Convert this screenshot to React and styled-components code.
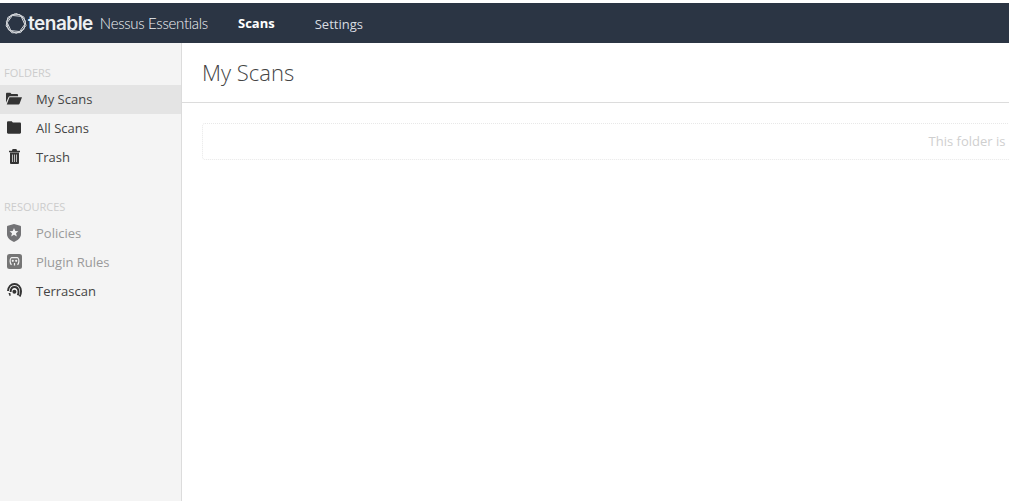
import React from "react";
import styled, { createGlobalStyle } from "styled-components";

const GlobalStyle = createGlobalStyle`
  html, body {
    margin: 0;
    padding: 0;
    height: 100%;
    background: #fff;
    overflow: hidden;
  }
  #root {
    height: 100%;
  }
`;

function OpenFolderIcon() {
  return (
    <svg width="16" height="13" viewBox="0 0 17 13">
      <path fill="#333" d="M0 11V1.500C0 .8.500.3 1.200.3h3.400l1.200 1.500h6c.6 0 1 .4 1 1v1.400H4.200c-.8 0-1.300.4-1.600 1L0 11z" />
      <path fill="#333" d="M3.700 5.200H17l-2.600 6.900c-.2.500-.6.700-1.100.7H.8l2.900-7.600z" />
    </svg>
  );
}

function FolderIcon() {
  return (
    <svg width="14" height="13" viewBox="0 0 14 13">
      <path fill="#333" d="M0 1.500C0 .7.600.2 1.300.2h3.500l1 1.400h7c.7 0 1.200.5 1.200 1.200v8.800c0 .7-.5 1.200-1.200 1.200H1.200C.5 12.800 0 12.300 0 11.600V1.500z" />
    </svg>
  );
}

function TrashIcon() {
  return (
    <svg width="11" height="15" viewBox="0 0 11 15">
      <path fill="#333" d="M3.600 0h3.800l.7 1.700H11v1.600H0V1.700h2.900L3.600 0z" />
      <path fill="#333" fillRule="evenodd" d="M1 3.500h9v10.200c0 .7-.5 1.300-1.200 1.300H2.200C1.500 15 1 14.400 1 13.700V3.500zm2 2v7.500h.7V5.500H3zm2.150 0v7.500h.7V5.500h-.7zm2.150 0v7.500H8V5.500h-.7z" />
    </svg>
  );
}

function ShieldIcon() {
  return (
    <svg width="14" height="18" viewBox="0 0 14 18">
      <path fill="#737376" d="M7 0l6.200 1.800c.5.100.8.500.8 1v7.500c0 3.300-3 6-7 7.700-4-1.700-7-4.400-7-7.700V2.800c0-.5.3-.9.800-1L7 0z" />
      <path fill="#f4f4f4" d="M7 4l1.300 2.900 3.100.3-2.400 2.100.8 3.100L7 10.700l-2.800 1.700.8-3.100-2.400-2.100 3.100-.3L7 4z" />
    </svg>
  );
}

function PluginIcon() {
  return (
    <svg width="15" height="15" viewBox="0 0 15 15">
      <rect width="15" height="15" rx="2.500" fill="#757575" />
      <path fill="none" stroke="#efefef" strokeWidth="1.200" d="M4.300 3.600C2.600 5.200 2.700 9 4.500 10.800M10.700 3.600c1.700 1.600 1.600 5.400-.2 7.200M4.300 3.600h6.400" />
      <circle cx="5.800" cy="6.800" r="1.100" fill="#efefef" />
      <circle cx="9.200" cy="6.800" r="1.100" fill="#efefef" />
      <path stroke="#efefef" strokeWidth="1.200" d="M7.500 9v2.500" />
    </svg>
  );
}

function TerrascanIcon() {
  return (
    <svg width="15" height="15" viewBox="0 0 15 15">
      <g fill="none" stroke="#333" strokeWidth="1.900">
        <path d="M1 8C1.300 3.800 4 1 7.500 1s6.200 2.900 6.500 7c.1 2-.4 3.700-1.300 5.500" />
        <path d="M3.600 9c.1-3 1.700-5 3.900-5s3.800 2 4 4.500c.1 1.400-.2 2.600-.8 3.700" />
      </g>
      <circle cx="7.400" cy="8.800" r="2" fill="#333" />
      <path fill="#333" d="M1.500 10h1.800l.5 2.500-1.300.5z" />
    </svg>
  );
}

// the logo ring is a few rotated polygons laid over each other
const ringPoints = (sides, radius, turn) =>
  Array.from({ length: sides }, (_, i) => {
    const angle = turn + (i * 2 * Math.PI) / sides;
    return `${(11 + radius * Math.cos(angle)).toFixed(2)},${(10.5 + radius * Math.sin(angle)).toFixed(2)}`;
  }).join(" ");

function LogoMark() {
  return (
    <svg width="22" height="21" viewBox="0 0 22 21">
      <g fill="none" stroke="#d6d9dd" strokeWidth="1">
        <polygon points={ringPoints(7, 10.2, 0.2)} />
        <polygon points={ringPoints(7, 9.8, 0.65)} />
        <polygon points={ringPoints(6, 8.800, 0.1)} />
      </g>
    </svg>
  );
}

const folders = [
  { label: "My Scans", icon: <OpenFolderIcon />, active: true },
  { label: "All Scans", icon: <FolderIcon /> },
  { label: "Trash", icon: <TrashIcon /> },
];

const resources = [
  { label: "Policies", icon: <ShieldIcon />, muted: true },
  { label: "Plugin Rules", icon: <PluginIcon />, muted: true },
  { label: "Terrascan", icon: <TerrascanIcon /> },
];

const App = () => {
  return (
    <Page>
      <GlobalStyle />
      <Header>
        <Brand>
          <LogoMark />
          <Wordmark>tenable</Wordmark>
          <Product>Nessus Essentials</Product>
        </Brand>
        <Nav>
          <NavLink $active>Scans</NavLink>
          <NavLink>Settings</NavLink>
        </Nav>
      </Header>
      <Body>
        <Sidebar>
          <SectionLabel>FOLDERS</SectionLabel>
          {folders.map((item) => (
            <SideItem key={item.label} $active={item.active}>
              <IconSlot>{item.icon}</IconSlot>
              {item.label}
            </SideItem>
          ))}
          <SectionLabel $spaced>RESOURCES</SectionLabel>
          {resources.map((item) => (
            <SideItem key={item.label} $muted={item.muted}>
              <IconSlot>{item.icon}</IconSlot>
              {item.label}
            </SideItem>
          ))}
        </Sidebar>
        <Main>
          <TitleBar>
            <Title>My Scans</Title>
          </TitleBar>
          <Empty>This folder is</Empty>
        </Main>
      </Body>
    </Page>
  );
};

const Page = styled.div`
  display: flex;
  flex-direction: column;
  height: 100%;
  padding-top: 3px;
  box-sizing: border-box;
  font-family: "Open Sans", sans-serif;
  overflow: hidden;
`;

const Header = styled.div`
  display: flex;
  align-items: center;
  flex: 0 0 40px;
  background-color: #2b3544;
`;

const Brand = styled.div`
  display: flex;
  align-items: center;
  width: 238px;
  padding-left: 5px;
  box-sizing: border-box;
`;

const Wordmark = styled.span`
  margin-left: 1px;
  font-family: "Inter", sans-serif;
  font-size: 19px;
  font-weight: 600;
  letter-spacing: -0.5px;
  color: #eef0f2;
`;

const Product = styled.span`
  margin-left: 7px;
  font-family: "Lato", sans-serif;
  font-size: 15px;
  font-weight: 300;
  letter-spacing: -0.3px;
  color: #f0f2f4;
  white-space: nowrap;
`;

const Nav = styled.div`
  display: flex;
  align-items: flex-start;
  gap: 40px;
`;

const NavLink = styled.span`
  padding-top: ${(p) => (p.$active ? "0" : "1px")};
  font-size: 13px;
  font-weight: ${(p) => (p.$active ? 700 : 400)};
  color: ${(p) => (p.$active ? "#fff" : "#d9dde2")};
`;

const Body = styled.div`
  display: flex;
  flex: 1;
  min-height: 0;
`;

const Sidebar = styled.div`
  flex: 0 0 182px;
  box-sizing: border-box;
  padding-top: 23px;
  background-color: #f4f4f4;
  border-right: 1px solid #dcdcdc;
`;

const SectionLabel = styled.div`
  height: 19px;
  margin-top: ${(p) => (p.$spaced ? "28px" : "0")};
  padding-left: 4px;
  font-size: 11px;
  line-height: 14px;
  color: #cccccc;
`;

const SideItem = styled.div`
  display: flex;
  align-items: center;
  height: 29px;
  padding-bottom: 2px;
  box-sizing: border-box;
  font-size: 13px;
  background-color: ${(p) => (p.$active ? "#e4e4e4" : "transparent")};
  color: ${(p) => (p.$muted ? "#9a9a9a" : "#444")};
`;

const IconSlot = styled.span`
  display: flex;
  justify-content: center;
  align-items: center;
  width: 36px;
  padding-right: 8px;
  box-sizing: border-box;
`;

const Main = styled.div`
  flex: 1;
  min-width: 0;
  overflow: hidden;
`;

const TitleBar = styled.div`
  display: flex;
  align-items: center;
  height: 57px;
  padding: 0 0 2px 20px;
  border-bottom: 1px solid #dcdcdc;
`;

const Title = styled.h1`
  margin: 0;
  font-size: 22px;
  font-weight: 300;
  color: #444;
`;

const Empty = styled.div`
  width: 1530px;
  height: 37px;
  margin: 20px 0 0 20px;
  box-sizing: border-box;
  border: 1px dotted #e8e8e8;
  border-radius: 3px;
  font-size: 13px;
  line-height: 35px;
  text-align: center;
  color: #cfcfcf;
`;

export default App;
